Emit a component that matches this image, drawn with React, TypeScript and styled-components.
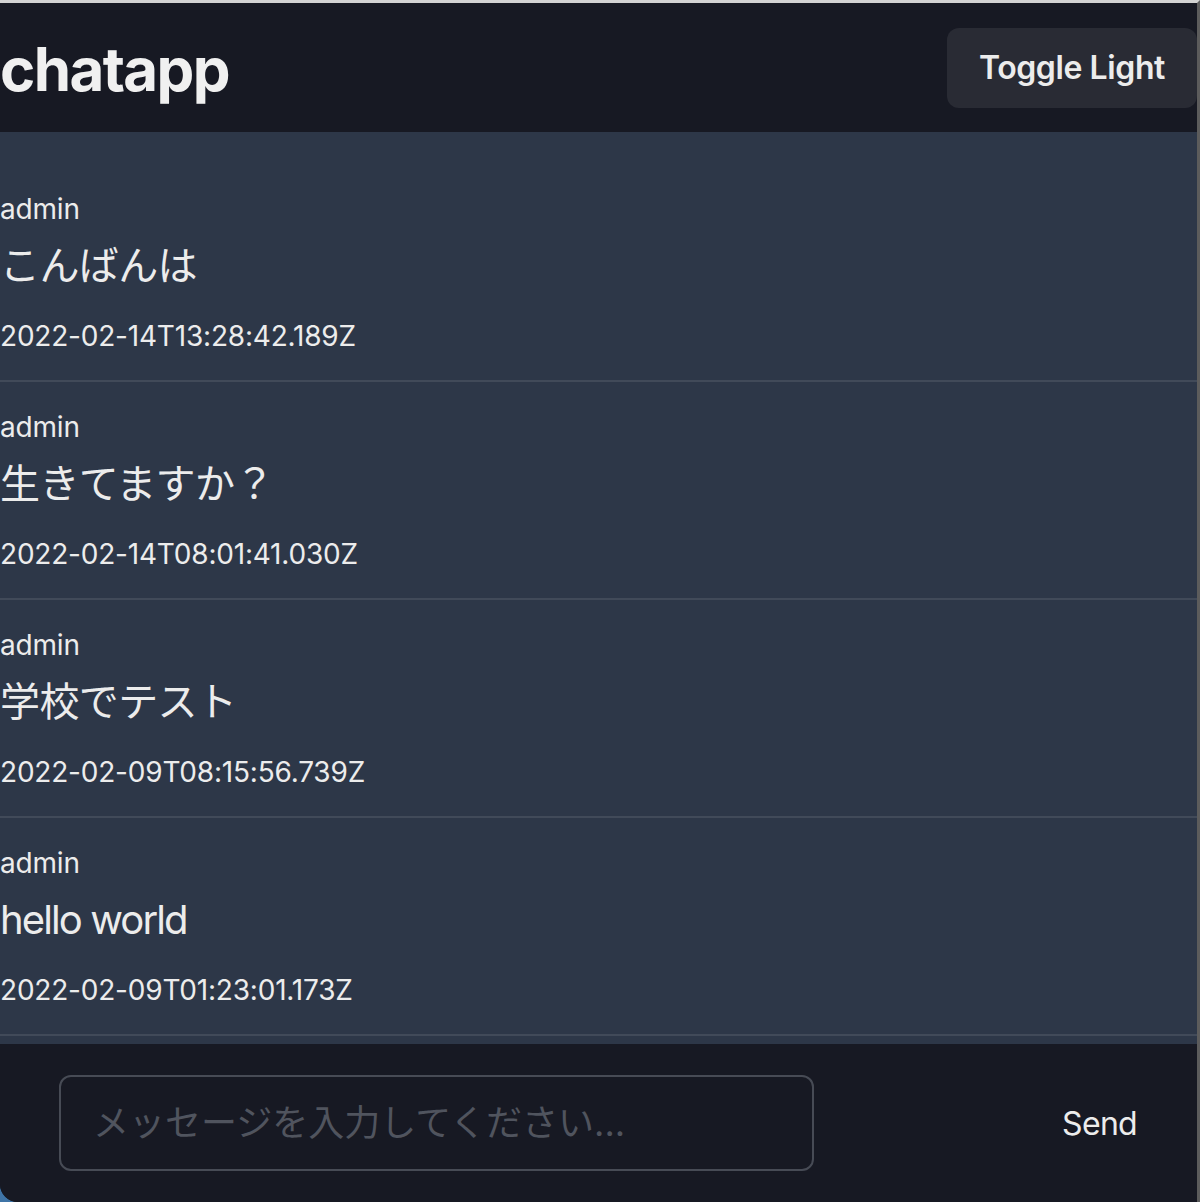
import React from "react";
import styled, { createGlobalStyle } from "styled-components";

const GlobalStyle = createGlobalStyle`
  html, body {
    margin: 0;
    padding: 0;
    background: #3f74a6;
  }
  * { box-sizing: border-box; }
  body {
    font-family: Inter, "Noto Sans CJK JP", sans-serif;
    color: #ececec;
  }
`;

const Window = styled.div`
  width: 1200px;
  height: 1202px;
  display: flex;
  flex-direction: column;
  border-top: 3px solid #d3d3d3;
  border-right: 3px solid #5c5c5c;
  border-bottom-left-radius: 18px;
  overflow: hidden;
  background: #171923;
`;

const Header = styled.header`
  height: 129px;
  flex: none;
  display: flex;
  align-items: center;
  justify-content: space-between;
  background: #171923;
`;

const Title = styled.h1`
  margin: 0;
  padding-top: 2px;
  font-size: 60px;
  font-weight: 700;
  letter-spacing: -1.6px;
  color: #f0f0f0;
`;

const ToggleButton = styled.button`
  height: 80px;
  padding: 0 32px;
  border: none;
  border-radius: 12px;
  background: rgba(255, 255, 255, 0.08);
  color: #ececec;
  font-family: Inter, "Noto Sans CJK JP", sans-serif;
  font-size: 32px;
  font-weight: 600;
  letter-spacing: -0.4px;
  cursor: pointer;
`;

const MessageList = styled.main`
  flex: 1;
  overflow: hidden;
  background: #2d3748;
  padding-top: 32px;
`;

const Message = styled.article`
  padding: 24px 0 23px;
  border-bottom: 2px solid #414a59;
`;

const Username = styled.div`
  height: 42px;
  line-height: 42px;
  font-size: 28px;
  letter-spacing: -0.2px;
  margin-bottom: 6px;
  color: #ececec;
`;

const Content = styled.div<{ $latin: boolean }>`
  height: 60px;
  line-height: 60px;
  font-size: 40px;
  letter-spacing: ${(p) => (p.$latin ? "-1.9px" : "-0.6px")};
  margin-bottom: 19px;
  color: #ececec;
  white-space: nowrap;
`;

const Timestamp = styled.div`
  height: 42px;
  line-height: 42px;
  font-size: 28px;
  letter-spacing: -0.2px;
  color: #ececec;
`;

const Footer = styled.footer`
  height: 158px;
  flex: none;
  display: flex;
  align-items: center;
  padding: 0 28px 0 59px;
  background: #171923;
`;

const MessageInput = styled.input`
  width: 755px;
  height: 96px;
  padding: 0 32px;
  border: 2px solid #474b55;
  border-radius: 12px;
  background: transparent;
  color: #ececec;
  font-family: Inter, "Noto Sans CJK JP", sans-serif;
  font-size: 36px;
  outline: none;
  &::placeholder {
    color: #50545e;
  }
`;

const SendButton = styled.button`
  margin-left: auto;
  height: 80px;
  padding: 0 32px;
  border: none;
  background: transparent;
  color: #ececec;
  font-family: Inter, "Noto Sans CJK JP", sans-serif;
  font-size: 32px;
  font-weight: 400;
  letter-spacing: -0.7px;
  cursor: pointer;
`;

type Msg = { user: string; text: string; time: string };

const messages: Msg[] = [
  { user: "admin", text: "こんばんは", time: "2022-02-14T13:28:42.189Z" },
  { user: "admin", text: "生きてますか？", time: "2022-02-14T08:01:41.030Z" },
  { user: "admin", text: "学校でテスト", time: "2022-02-09T08:15:56.739Z" },
  { user: "admin", text: "hello world", time: "2022-02-09T01:23:01.173Z" },
];

const isLatin = (s: string) => /^[\x00-\x7F]*$/.test(s);

export default function App() {
  return (
    <>
      <GlobalStyle />
      <Window>
        <Header>
          <Title>chatapp</Title>
          <ToggleButton>Toggle Light</ToggleButton>
        </Header>
        <MessageList>
          {messages.map((m, i) => (
            <Message key={i}>
              <Username>{m.user}</Username>
              <Content $latin={isLatin(m.text)}>{m.text}</Content>
              <Timestamp>{m.time}</Timestamp>
            </Message>
          ))}
        </MessageList>
        <Footer>
          <MessageInput placeholder="メッセージを入力してください..." />
          <SendButton>Send</SendButton>
        </Footer>
      </Window>
    </>
  );
}
